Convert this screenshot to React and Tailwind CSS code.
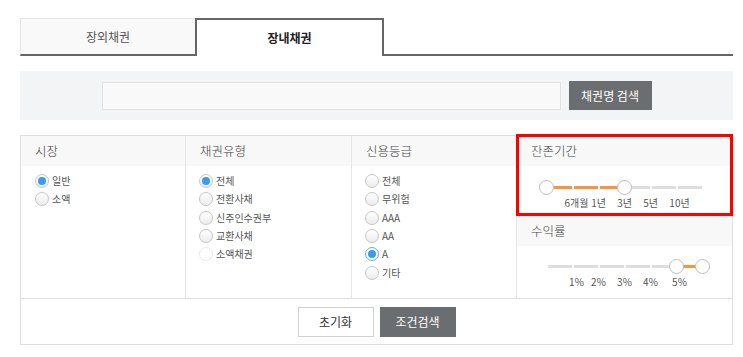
import React from 'react';

const Radio = ({ label, checked, disabled, focused }) => (
    <label className="flex items-center h-[18.3px] gap-[3px]">
        <span
            className={`w-[14px] h-[14px] rounded-full border flex items-center justify-center shrink-0 ${
                disabled
                    ? 'border-[#e8e8e8] bg-white'
                    : focused
                    ? 'border-[#62aef0] bg-white'
                    : 'border-[#c6c6c6] bg-gradient-to-b from-white to-[#ececec]'
            }`}
        >
            {checked && <span className="w-[8px] h-[8px] rounded-full bg-[#3d9ce8]" />}
        </span>
        <span className="text-[10px] leading-none text-[#555]">{label}</span>
    </label>
);

const Slider = ({ from, to, labels }) => {
    const segs = [0, 1, 2, 3, 4, 5];
    return (
        <div className="relative w-[156px] h-[34px] mx-auto">
            <div className="absolute left-0 right-0 top-[6px] flex gap-[2px] px-[1px]">
                {segs.map((i) => (
                    <div
                        key={i}
                        className={`h-[3px] flex-1 ${i >= from && i < to ? 'bg-[#f7943d]' : 'bg-[#dedede]'}`}
                    />
                ))}
            </div>
            {[from, to].map((t, i) => (
                <div
                    key={i}
                    className="absolute top-0 w-[15px] h-[15px] -ml-[7.5px] rounded-full bg-white border border-[#bdbdbd]"
                    style={{ left: t * 26 }}
                />
            ))}
            {labels.map((l, i) => (
                <span
                    key={l}
                    className="absolute top-[17px] -translate-x-1/2 text-[10px] leading-[12px] text-[#555] whitespace-nowrap"
                    style={{ left: (i + 1) * 26 + (i === 0 ? 4 : i === 4 ? 3 : 0) }}
                >
                    {l}
                </span>
            ))}
        </div>
    );
};

const Header = ({ children }) => (
    <div className="h-[30px] bg-[#f8f8f8] flex items-center pl-[14px] text-[12.5px] font-light text-[#444]">{children}</div>
);

export default function App() {
    return (
        <div className="w-[743px] h-[357px] bg-white font-['Noto_Sans_CJK_KR','Noto_Sans',sans-serif] pt-[18px]">
            <div className="ml-[20px] w-[713px]">
                {/* tabs */}
                <div className="flex items-end h-[38px]">
                    <div className="w-[175px] h-[38px] bg-[#f9f9f9] border-t border-l border-[#e3e3e3] border-b-2 border-b-[#666] flex items-center justify-center text-[12px] text-[#555]">
                        장외채권
                    </div>
                    <div className="w-[189px] h-[38px] bg-white border-2 border-b-0 border-[#666] flex items-center justify-center text-[12px] font-bold text-[#222]">
                        장내채권
                    </div>
                    <div className="flex-1 border-b-2 border-[#666]" />
                </div>

                {/* search */}
                <div className="mt-[15px] h-[49px] bg-[#f3f4f5] flex items-center justify-center gap-[8px]">
                    <div className="w-[459px] h-[28px] bg-[#f9f9f9] border border-[#e2e2e2]" />
                    <button className="w-[83px] h-[29px] bg-[#6b6e70] text-white text-[12px]">채권명 검색</button>
                </div>

                {/* filters */}
                <div className="mt-[15px] border border-[#dedede]">
                    <div className="flex h-[162px]">
                        <div className="w-[165px] border-r border-[#e6e6e6]">
                            <Header>시장</Header>
                            <div className="pl-[14px] pt-[6px]">
                                <Radio label="일반" checked />
                                <Radio label="소액" />
                            </div>
                        </div>
                        <div className="w-[166px] border-r border-[#e6e6e6]">
                            <Header>채권유형</Header>
                            <div className="pl-[13px] pt-[6px]">
                                <Radio label="전체" checked />
                                <Radio label="전환사채" />
                                <Radio label="신주인수권부" />
                                <Radio label="교환사채" />
                                <Radio label="소액채권" disabled />
                            </div>
                        </div>
                        <div className="w-[165px] border-r border-[#e6e6e6]">
                            <Header>신용등급</Header>
                            <div className="pl-[13px] pt-[6px]">
                                <Radio label="전체" />
                                <Radio label="무위험" />
                                <Radio label="AAA" />
                                <Radio label="AA" />
                                <Radio label="A" checked focused />
                                <Radio label="기타" />
                            </div>
                        </div>
                        <div className="flex-1">
                            <div className="relative h-[80px] border-b border-[#e6e6e6]">
                                <Header>잔존기간</Header>
                                <div className="pt-[14px]">
                                    <Slider from={0} to={3} labels={['6개월', '1년', '3년', '5년', '10년']} />
                                </div>
                                <div className="absolute -top-[2px] -left-[1px] -right-[1px] -bottom-[1px] border-[3px] border-[#ff0000] pointer-events-none" />
                            </div>
                            <Header>수익률</Header>
                            <div className="pt-[13px]">
                                <Slider from={5} to={6} labels={['1%', '2%', '3%', '4%', '5%']} />
                            </div>
                        </div>
                    </div>
                    <div className="h-[46px] border-t border-[#dedede] flex items-center justify-center gap-[6px]">
                        <button className="w-[76px] h-[30px] bg-white border border-[#cfcfcf] text-[12px] text-[#333]">초기화</button>
                        <button className="w-[76px] h-[30px] bg-[#6b6e70] text-white text-[12px]">조건검색</button>
                    </div>
                </div>
            </div>
        </div>
    );
}
